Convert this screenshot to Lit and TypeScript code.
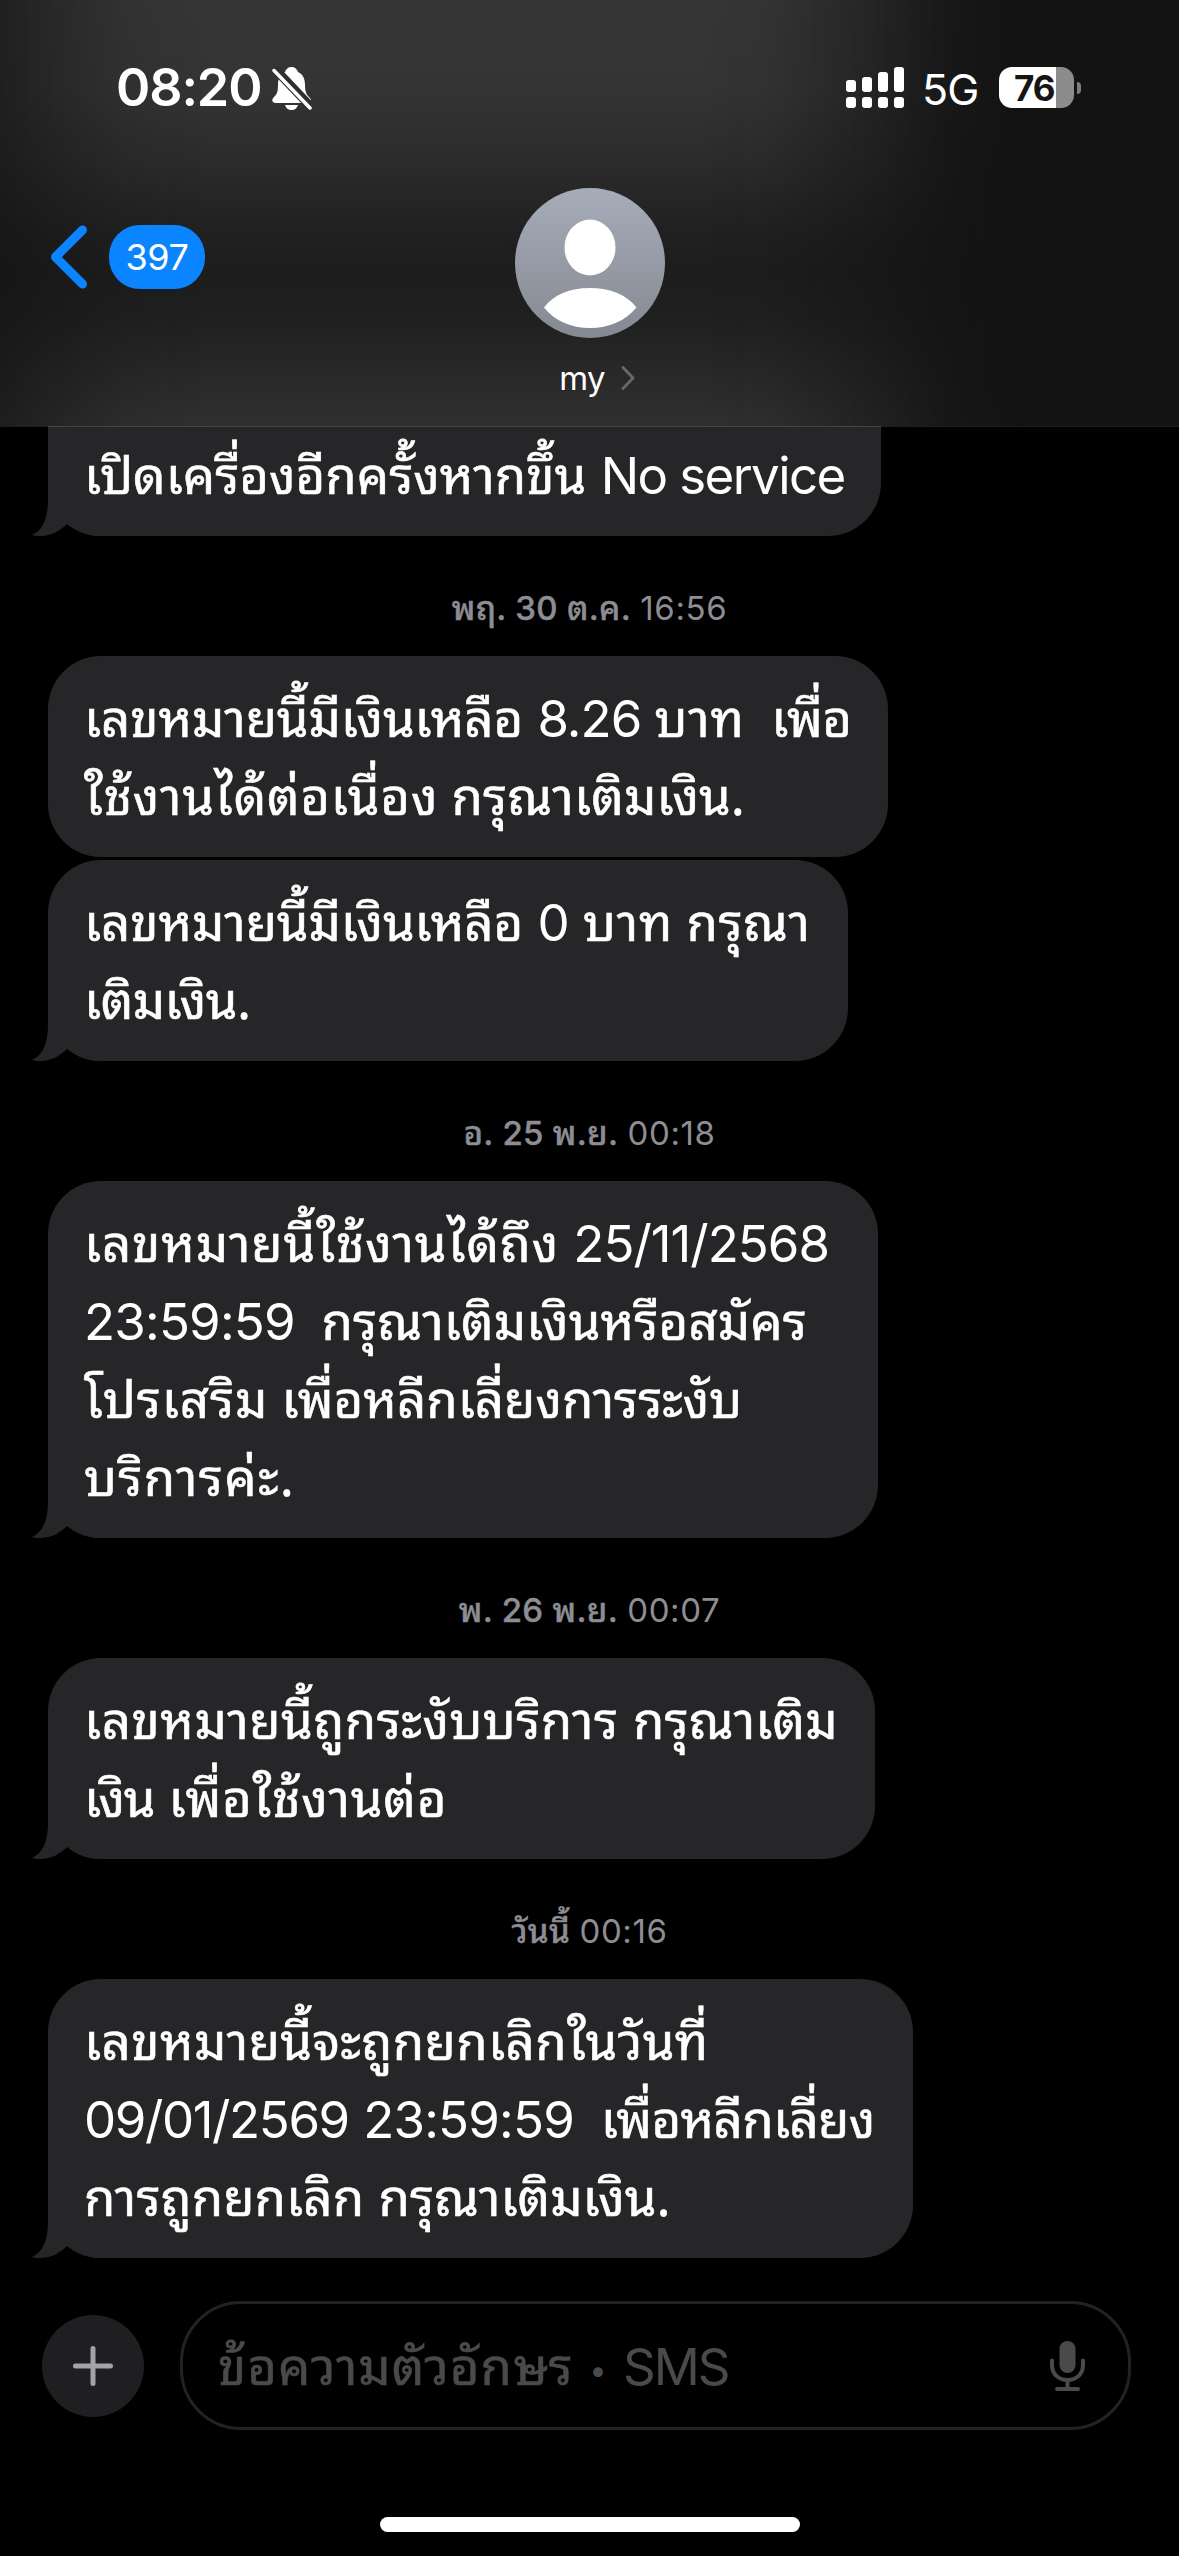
import { LitElement, html, css, svg } from "lit";
import { customElement } from "lit/decorators.js";

/* A run is a piece of text with its tracking in pixels. */
type Run = [string, number];
interface Bubble { lines: Run[][]; tail: boolean; width: number; }
interface Group { day?: string; time?: string; bubbles: Bubble[]; }

const groups: Group[] = [
  { bubbles: [{ lines: [[["เปิดเครื่องอีกครั้งหากขึ้น", 0], [" ", 0], ["No service", -1.6]]], tail: true, width: 833 }] },
  { day: "พฤ. 30 ต.ค.", time: "16:56", bubbles: [
    { lines: [
      [["เลขหมายนี้มีเงินเหลือ", -0.1], [" ", 0], ["8.26", -1], [" ", -1], ["บาท", 0.7], ["  ", -1], ["เพื่อ", -0.4]],
      [["ใช้งานได้ต่อเนื่อง", 0.75], [" ", -1], ["กรุณาเติมเงิน.", 0.15]],
    ], tail: false, width: 840 },
    { lines: [
      [["เลขหมายนี้มีเงินเหลือ", -0.1], [" ", 0], ["0", 0], [" ", -1], ["บาท", 0.8], [" ", -1], ["กรุณา", 0.5]],
      [["เติมเงิน.", -0.5]],
    ], tail: true, width: 800 },
  ] },
  { day: "อ. 25 พ.ย.", time: "00:18", bubbles: [
    { lines: [
      [["เลขหมายนี้ใช้งานได้ถึง", 0.85], [" ", 0], ["25/11/2568", -1]],
      [["23:59:59", -0.8], ["  ", -1], ["กรุณาเติมเงินหรือสมัคร", 0.1]],
      [["โปรเสริม", 0.9], [" ", -1], ["เพื่อหลีกเลี่ยงการระงับ", 0]],
      [["บริการค่ะ.", 1.4]],
    ], tail: true, width: 830 },
  ] },
  { day: "พ. 26 พ.ย.", time: "00:07", bubbles: [
    { lines: [
      [["เลขหมายนี้ถูกระงับบริการ", 0.5], [" ", 0], ["กรุณาเติม", 0.1]],
      [["เงิน", -1.3], [" ", 0], ["เพื่อใช้งานต่อ", 0.75]],
    ], tail: true, width: 827 },
  ] },
  { day: "วันนี้", time: "00:16", bubbles: [
    { lines: [
      [["เลขหมายนี้จะถูกยกเลิกในวันที่", 0.4]],
      [["09/01/2569", -1.4], [" ", 0], ["23:59:59", -0.8], ["  ", -1], ["เพื่อหลีกเลี่ยง", -0.65]],
      [["การถูกยกเลิก", 0.1], [" ", 0], ["กรุณาเติมเงิน.", 0]],
    ], tail: true, width: 865 },
  ] },
];

const tail = svg`<path d="M16 0V24C16 42 11 54 0 59C3 60 6 60 9 60C19 60 28 55 35 48C45 56 56 60 68 60V0Z" fill="#262628"/>`;

@customElement("app-root")
export class AppRoot extends LitElement {
  static styles = css`
    :host { display: block; font-family: Inter, "Noto Sans Thai Looped", sans-serif; color: #fff; }
    .screen { height: 2556px; background: #000; display: flex; flex-direction: column; overflow: hidden; }
    svg { display: block; flex: none; }

    .header { position: relative; height: 426px; flex: none; background: #131313; border-bottom: 1px solid #1f1f20; display: flex; flex-direction: column; }
    .glow { position: absolute; inset: 0; background: linear-gradient(#363636 0, #343435 90px, #2b2b2c 165px, #202020 235px, #1d1d1d 275px, #202020 320px, #303030 426px);
      -webkit-mask-image: linear-gradient(90deg, rgba(0,0,0,.38) 0, rgba(0,0,0,.65) 60px, rgba(0,0,0,.9) 130px, #000 210px, #000 700px, rgba(0,0,0,.92) 770px, rgba(0,0,0,.55) 865px, rgba(0,0,0,.15) 950px, transparent 1020px);
      mask-image: linear-gradient(90deg, rgba(0,0,0,.38) 0, rgba(0,0,0,.65) 60px, rgba(0,0,0,.9) 130px, #000 210px, #000 700px, rgba(0,0,0,.92) 770px, rgba(0,0,0,.55) 865px, rgba(0,0,0,.15) 950px, transparent 1020px); }
    .status { position: relative; height: 176px; box-sizing: border-box; padding: 57px 98px 0 115px; display: flex; align-items: flex-start; }
    .clock { font-size: 52px; line-height: 62px; font-weight: 590; letter-spacing: -1.1px; width: 156px; padding-left: 1px; box-sizing: border-box; white-space: nowrap; }
    .bell { margin: 9px 0 0 1px; }
    .grow { flex: 1; }
    .bars { margin-top: 10px; }
    .net { font-size: 43px; line-height: 62px; margin-left: 18px; width: 77px; letter-spacing: -1px; margin-top: 1px; }
    .battery { margin-top: 10px; width: 75px; height: 41px; border-radius: 13px; background: linear-gradient(90deg, #fff 57px, #8c8c8c 57px); color: #151515; font-size: 35px; line-height: 42px; font-weight: 650; letter-spacing: -1px; text-indent: 15px; }
    .nub { width: 4px; height: 12px; border-radius: 0 4px 4px 0; background: #7d7d7d; margin: 25px 0 0 3px; }
    .nav { position: relative; display: grid; grid-template-columns: 1fr 150px 1fr; }
    .back { display: flex; align-items: flex-start; padding: 49px 0 0 50px; }
    .count { margin-left: 21px; width: 96px; height: 64px; border-radius: 31px; background: #0a84ff; font-size: 36px; line-height: 64px; text-align: center; letter-spacing: -0.4px; }
    .who { display: flex; flex-direction: column; align-items: center; padding: 12px 0 0 1px; }
    .name { display: flex; align-items: center; gap: 16px; font-size: 33px; line-height: 40px; letter-spacing: -0.8px; margin: 20px 0 0 14px; }

    .thread { height: 1831px; flex: none; display: flex; flex-direction: column; }
    .stamp { height: 120px; box-sizing: border-box; padding-top: 50px; text-align: center; font-size: 33px; line-height: 44px; color: #8d8d93; white-space: pre; }
    .day { font-weight: 550; letter-spacing: 0.3px; -webkit-text-stroke: 0.4px #8d8d93; }
    .time { letter-spacing: 0.6px; }
    .bubbles { display: flex; flex-direction: column; gap: 3px; align-items: flex-start; padding-left: 48px; }
    .bubble { position: relative; box-sizing: border-box; background: #262628; border-radius: 53px; padding: 19px 0 26px 36px; }
    .cut { border-radius: 0 0 53px 53px; padding-top: 5px; margin-top: -1px; border-top: 1px solid #444446; }
    .tail { position: absolute; left: -16px; bottom: 0; }
    .line { position: relative; height: 78px; line-height: 78px; font-size: 51px; white-space: pre; }
    .thai { font-family: "Noto Sans Thai Looped", sans-serif; -webkit-text-stroke: 0.6px currentColor; }

    .composer { display: flex; align-items: center; padding: 43px 48px 0 42px; gap: 36px; }
    .plus { width: 102px; height: 102px; border-radius: 50%; background: #1f1f21; display: grid; place-items: center; }
    .field { flex: 1; box-sizing: border-box; height: 129px; border: 3px solid #222224; border-radius: 61px; display: flex; align-items: center; padding: 0 43px 0 35px; color: #4a4a4c; }
    .hint { flex: 1; display: flex; align-items: baseline; font-size: 51px; line-height: 70px; margin-top: 5px; }
    .label { width: 355px; letter-spacing: 1px; white-space: nowrap; }
    .dot { position: relative; top: -4px; width: 50px; text-align: center; font-size: 31px; }
    .sms { letter-spacing: -2px; }
    .home { width: 420px; height: 15px; border-radius: 8px; background: #fff; margin: 87px auto 0; }
  `;

  private line(runs: Run[]) {
    return html`<div class="line">${runs.map(([text, track]) =>
      html`<span class=${/[\u0e00-\u0e7f]/.test(text) ? "thai" : "latin"} style="letter-spacing:${track}px">${text}</span>`)}</div>`;
  }

  render() {
    return html`<div class="screen">
      <div class="header">
        <div class="glow"></div>
        <div class="status">
          <div class="clock">08:20</div>
          <svg class="bell" width="40" height="46" viewBox="0 0 40 46"><path d="M13 6C14 3 16 1 19.500 1S25 3 26 6C31 8 33 13 33 19C33 27 35 29 38 32C40 35 39 37 36 37H4C0 37 -1 34 2 31C5 28 6 26 6 19C6 13 8 8 13 6ZM13 39H26C25 42 23 44 19.500 44S14 42 13 39Z" fill="#fff"/><path d="M3 3L40 42" stroke="#303031" stroke-width="9"/><path d="M2 4.500L38 42" stroke="#fff" stroke-width="3.500" stroke-linecap="round"/></svg>
          <div class="grow"></div>
          <svg class="bars" width="58" height="41" viewBox="0 0 58 41" fill="#fff"><rect y="13" width="10" height="12" rx="3"/><rect x="16" y="10" width="10" height="15" rx="3"/><rect x="32" y="5" width="10" height="20" rx="3"/><rect x="48" width="10" height="25" rx="3"/><rect y="30" width="10" height="11" rx="3"/><rect x="16" y="30" width="10" height="11" rx="3"/><rect x="32" y="30" width="10" height="11" rx="3"/><rect x="48" y="30" width="10" height="11" rx="3"/></svg>
          <div class="net">5G</div>
          <div class="battery">76</div><div class="nub"></div>
        </div>
        <div class="nav">
          <div class="back">
            <svg width="38" height="64" viewBox="0 0 38 64"><path d="M32.500 5L5.500 32L32.500 59" fill="none" stroke="#0a84ff" stroke-width="9" stroke-linecap="round" stroke-linejoin="round"/></svg>
            <div class="count">397</div>
          </div>
          <div class="who">
            <svg width="150" height="150" viewBox="0 0 150 150"><defs><linearGradient id="g" x2="0" y2="1"><stop stop-color="#a7acba"/><stop offset="1" stop-color="#858992"/></linearGradient></defs><circle cx="75" cy="75" r="75" fill="url(#g)"/><ellipse cx="75" cy="59.500" rx="25.500" ry="28" fill="#fff"/><path d="M29 119.500C38 107 55 100 75 100S112 107 121.500 119.500C110 133 94 140 75 140S40 133 29 119.500Z" fill="#fff"/></svg>
            <div class="name"><span>my</span><svg width="14" height="24" viewBox="0 0 14 24"><path d="M2 1.500L12 12L2 22.500" fill="none" stroke="#69696b" stroke-width="2.800" stroke-linecap="round" stroke-linejoin="round"/></svg></div>
          </div>
        </div>
      </div>

      <div class="thread">${groups.map((g, i) => html`
        ${g.day ? html`<div class="stamp"><span class="day">${g.day}</span> <span class="time">${g.time}</span></div>` : ""}
        <div class="bubbles">${g.bubbles.map((b) => html`
          <div class="bubble ${i ? "" : "cut"}" style="width:${b.width}px">
            ${b.tail ? html`<svg class="tail" width="70" height="60" viewBox="0 0 70 60">${tail}</svg>` : ""}
            ${b.lines.map((l) => this.line(l))}
          </div>`)}</div>`)}
      </div>

      <div class="composer">
        <div class="plus"><svg width="40" height="40" viewBox="0 0 40 40"><path d="M20 2.500V37.500M2.500 20H37.500" stroke="#a4a3a8" stroke-width="5" stroke-linecap="round"/></svg></div>
        <div class="field">
          <div class="hint"><span class="label thai">ข้อความตัวอักษร</span><span class="dot">•</span><span class="sms">SMS</span></div>
          <svg width="35" height="50" viewBox="0 0 35 50"><rect x="9.500" y="0" width="16" height="32" rx="8" fill="#4a4a4c"/><path d="M2 19.500V24C2 33 8.500 39 17.500 39S33 33 33 24V19.500M17.500 39V47M7 48H28" fill="none" stroke="#4a4a4c" stroke-width="4" stroke-linecap="round"/></svg>
        </div>
      </div>
      <div class="home"></div>
    </div>`;
  }
}
